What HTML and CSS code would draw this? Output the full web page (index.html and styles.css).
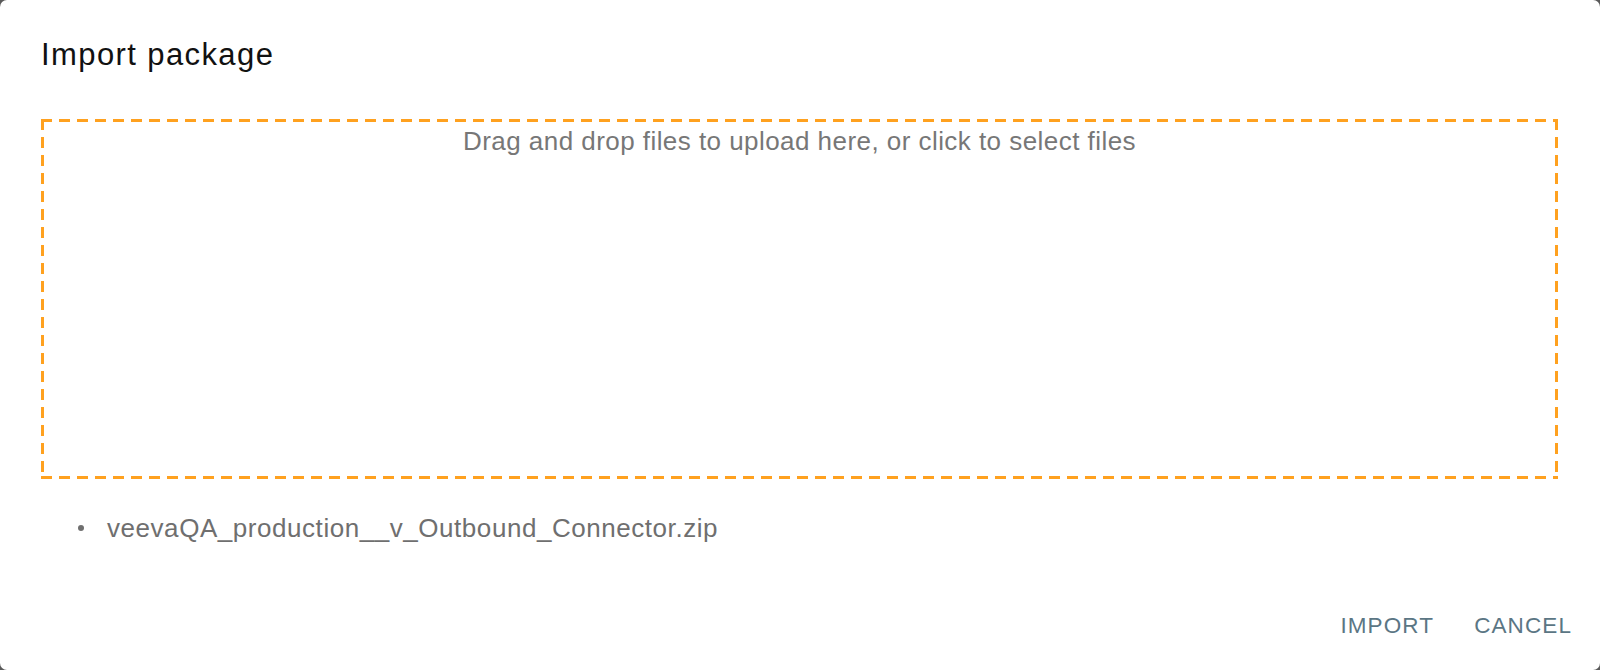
FILE: index.html
```html
<!DOCTYPE html>
<html lang="en">
<head>
<meta charset="utf-8">
<title>Import package</title>
<link rel="stylesheet" href="styles.css">
</head>
<body>
<div class="dialog">
  <h2 class="title">Import package</h2>
  <div class="dropzone">
    <p class="drop-text">Drag and drop files to upload here, or click to select files</p>
  </div>
  <ul class="files">
    <li class="file">veevaQA_production__v_Outbound_Connector.zip</li>
  </ul>
  <div class="actions">
    <button class="btn">IMPORT</button>
    <button class="btn">CANCEL</button>
  </div>
</div>
</body>
</html>
```
FILE: styles.css
```css
html, body {
  margin: 0;
  padding: 0;
  width: 1600px;
  height: 670px;
  overflow: hidden;
  background: #5a5a5a;
}
.dialog {
  box-sizing: border-box;
  width: 1600px;
  height: 670px;
  background: #fff;
  border-radius: 7px;
  display: flex;
  flex-direction: column;
  padding: 0 43px 0 41px;
  font-family: "Liberation Sans", Arial, sans-serif;
}
.title {
  margin: 37px 0 0 0;
  font-size: 31px;
  font-weight: 400;
  letter-spacing: 1.4px;
  line-height: 36px;
  color: #111;
}
.dropzone {
  box-sizing: border-box;
  margin-top: 46px;
  height: 360px;
  width: 1517px;
  background:
    repeating-linear-gradient(to right, #ffa11f 0 11px, transparent 11px 18px) top left / 100% 3px no-repeat,
    repeating-linear-gradient(to right, #ffa11f 0 11px, transparent 11px 18px) bottom left / 100% 3px no-repeat,
    repeating-linear-gradient(to bottom, #ffa11f 0 11px, transparent 11px 18px) top left / 3px 100% no-repeat,
    repeating-linear-gradient(to bottom, #ffa11f 0 11px, transparent 11px 18px) top right / 3px 100% no-repeat;
}
.drop-text {
  margin: 7px 0 0 0;
  text-align: center;
  font-size: 26px;
  line-height: 30px;
  letter-spacing: 0.45px;
  color: #777;
}
.files {
  list-style: none;
  margin: 34px 0 0 0;
  padding-left: 37px;
  font-size: 26px;
  line-height: 30px;
  letter-spacing: 0.55px;
  color: #6f6f6f;
}
.file {
  display: flex;
  align-items: center;
}
.file::before {
  content: "";
  width: 6px;
  height: 6px;
  border-radius: 50%;
  background: #6f6f6f;
  margin-right: 23px;
  flex: none;
}
.actions {
  margin-top: auto;
  margin-bottom: 31px;
  display: flex;
  justify-content: flex-end;
  gap: 40px;
  margin-right: -15px;
}
.btn {
  border: 0;
  background: none;
  padding: 0;
  font-family: "Liberation Sans", Arial, sans-serif;
  font-size: 22.5px;
  line-height: 26px;
  letter-spacing: 1.1px;
  color: #5b7684;
  cursor: pointer;
}
```
